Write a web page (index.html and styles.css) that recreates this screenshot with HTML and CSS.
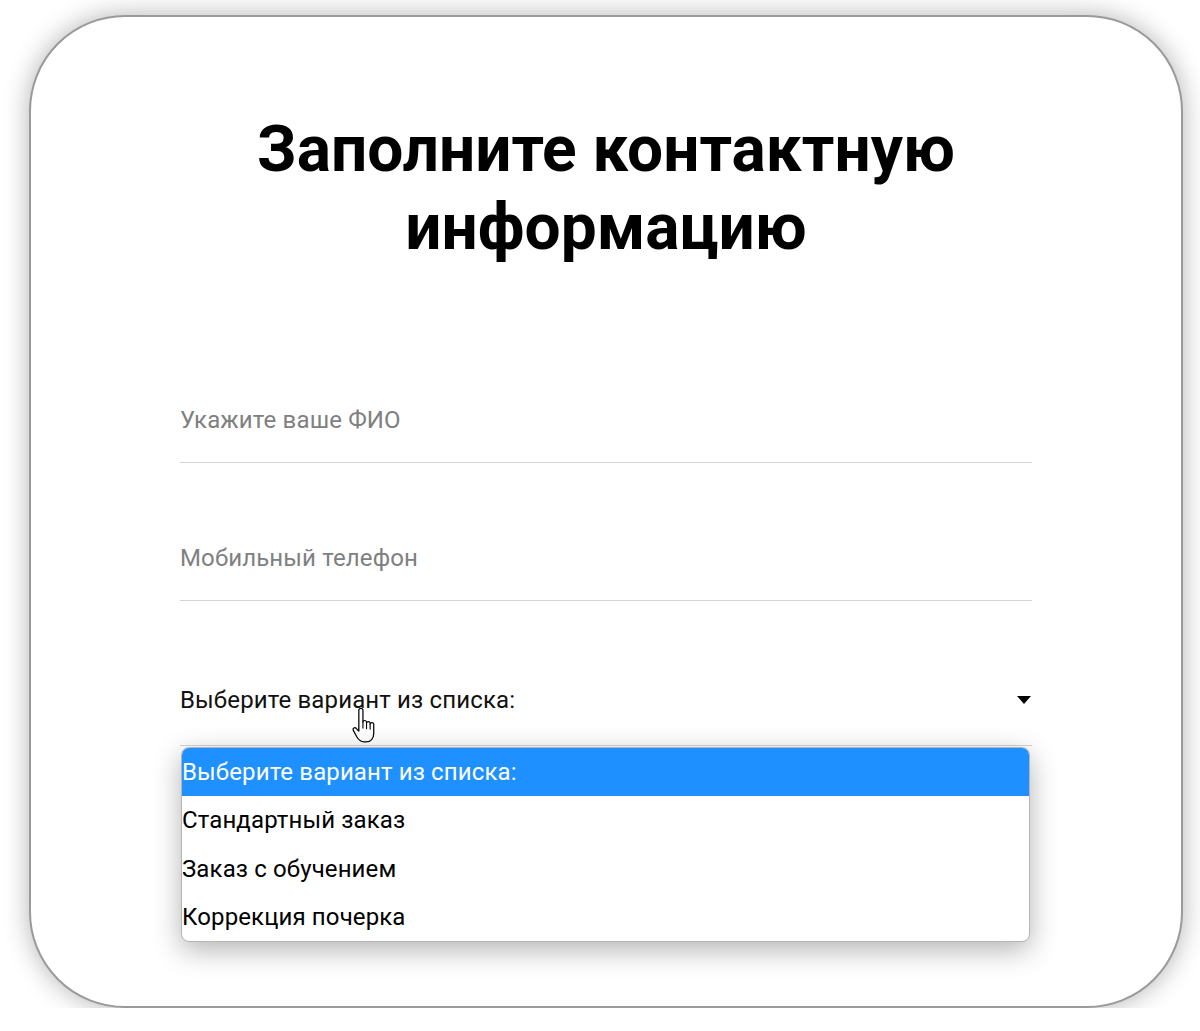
FILE: index.html
```html
<!DOCTYPE html>
<html lang="ru">
<head>
<meta charset="utf-8">
<title>Контактная информация</title>
<link rel="stylesheet" href="styles.css">
</head>
<body>
<div class="card">
  <h1 class="title">Заполните контактную<br>информацию</h1>
  <form class="form">
    <div class="field first">
      <input class="input" type="text" placeholder="Укажите ваше ФИО">
    </div>
    <div class="field second">
      <input class="input" type="text" placeholder="Мобильный телефон">
    </div>
    <div class="field select">
      <span class="select-value">Выберите вариант из списка:</span>
      <span class="arrow"></span>
      <svg class="cursor" width="28" height="38" viewBox="0 0 27 37" xmlns="http://www.w3.org/2000/svg">
        <path d="M7.5 4.2a2 2 0 0 1 4 0V15.5a1.8 1.8 0 0 1 3.5 0v1a1.8 1.8 0 0 1 3.5 0v1a1.8 1.8 0 0 1 3.5 0V27c0 4.5-3 8-7.5 8h-2c-3 0-5-1.5-7-5l-3.4-6.3a1.7 1.7 0 0 1 2.8-1.9L7.5 24.5Z" fill="#fff" stroke="#000" stroke-width="1.2" stroke-linejoin="round"/>
        <path d="M11.5 15.5v6M15 16.5v5.5M18.5 17.5v5" stroke="#000" stroke-width="1.1" stroke-linecap="round" fill="none"/>
      </svg>
      <ul class="options">
        <li class="option active">Выберите вариант из списка:</li>
        <li class="option">Стандартный заказ</li>
        <li class="option">Заказ с обучением</li>
        <li class="option">Коррекция почерка</li>
      </ul>
    </div>
  </form>
</div>
</body>
</html>
```
FILE: styles.css
```css
html, body {
  margin: 0;
  padding: 0;
  background: #ffffff;
}

body {
  font-family: Roboto, "Noto Sans", sans-serif;
  overflow: hidden;
}

.card {
  box-sizing: border-box;
  width: 1154px;
  height: 993px;
  margin: 15px 0 0 29px;
  border: 2px solid #9a9a9a;
  border-radius: 96px;
  background: #fff;
  box-shadow: 0 0 26px rgba(0, 0, 0, 0.3);
}

.title {
  margin: 94px 0 0;
  font-family: Roboto, sans-serif;
  font-weight: 700;
  font-size: 64px;
  line-height: 78px;
  text-align: center;
  color: #000;
}

.form {
  width: 852px;
  margin: 0 0 0 149px;
}

.field {
  position: relative;
  border-bottom: 1px solid #d4d4d4;
}

.field.first {
  margin-top: 133px;
}

.field.second {
  margin-top: 75px;
}

.field.select {
  margin-top: 79px;
  height: 65px;
  display: flex;
  align-items: flex-start;
  justify-content: space-between;
}

.input {
  display: block;
  box-sizing: content-box;
  width: 100%;
  height: 40px;
  padding: 0 0 22px;
  border: 0;
  outline: none;
  background: transparent;
  font-family: Roboto, sans-serif;
  font-size: 24px;
  letter-spacing: 0.14px;
  color: #222;
}

.input::placeholder {
  color: #808080;
  opacity: 1;
}

.select-value {
  font-size: 24px;
  letter-spacing: 0.14px;
  line-height: 40px;
  color: #111;
}

.arrow {
  width: 0;
  height: 0;
  margin: 16px 1px 0 0;
  border-left: 7px solid transparent;
  border-right: 7px solid transparent;
  border-top: 8px solid #000;
}

.cursor {
  position: absolute;
  left: 171px;
  top: 26px;
}

.options {
  position: absolute;
  left: 1px;
  top: 67px;
  width: 849px;
  margin: 0;
  padding: 0;
  list-style: none;
  box-sizing: border-box;
  border: 1px solid #b5b5b5;
  border-radius: 8px;
  overflow: hidden;
  background: #fff;
  box-shadow: 0 8px 28px rgba(0, 0, 0, 0.3);
}

.option {
  height: 48.25px;
  line-height: 48px;
  padding-left: 0;
  font-size: 24px;
  letter-spacing: 0.12px;
  color: #000;
}

.option.active {
  background: #1e90ff;
  color: #fff;
}
```
